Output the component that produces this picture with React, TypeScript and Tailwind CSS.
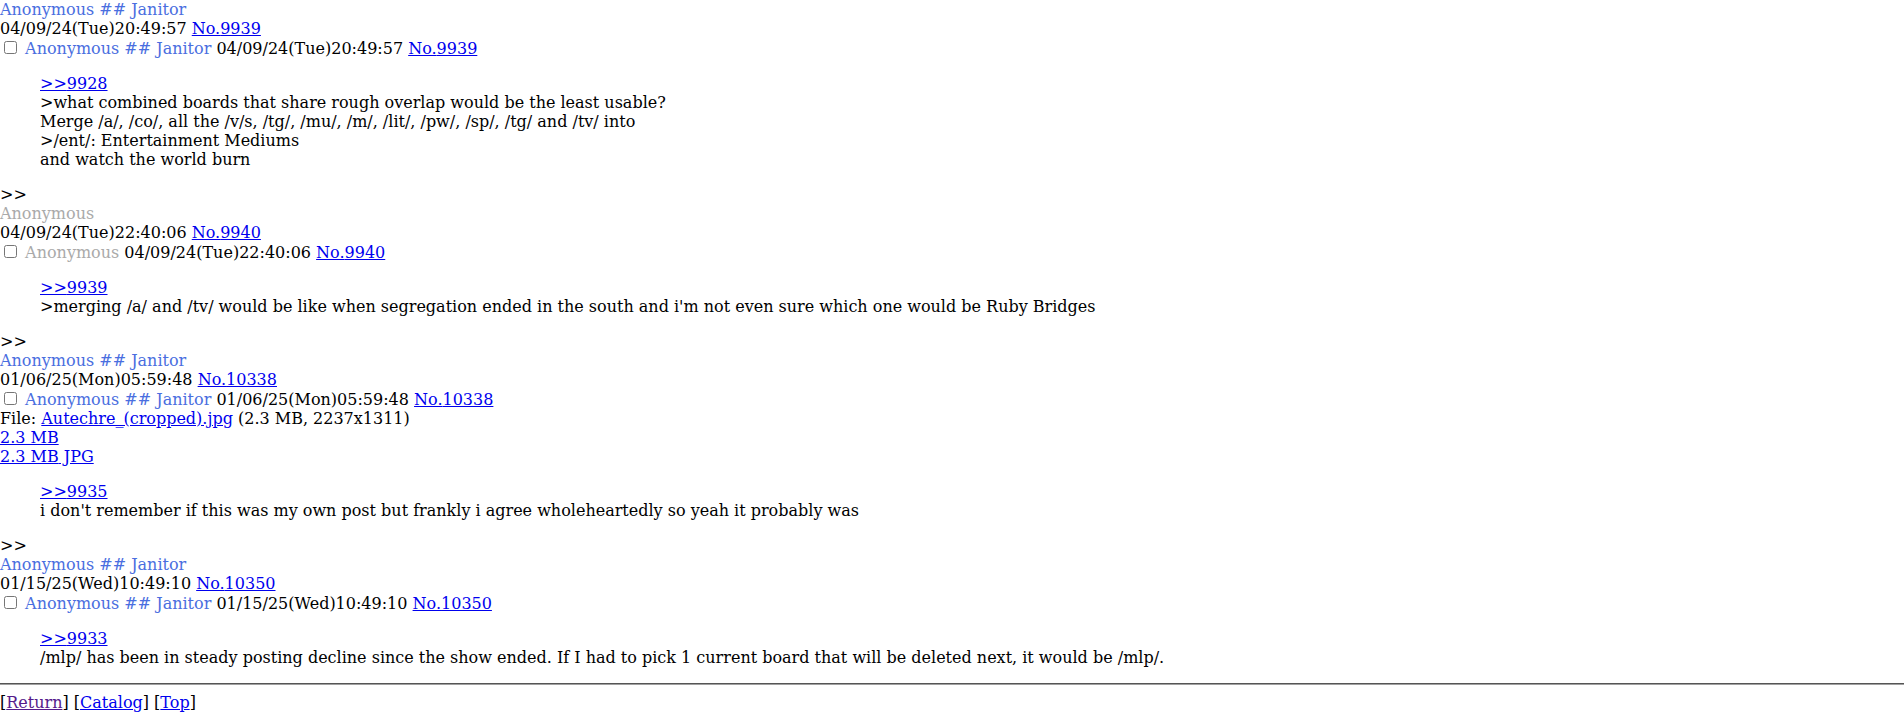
import React from "react"

const link = "text-[#0000ee] underline"

interface Post {
  name: string
  janitor?: boolean
  date: string
  no: string
  file?: { name: string; info: string; size: string }
  quote: string
  lines: string[]
  arrows?: boolean
}

const posts: Post[] = [
  {
    name: "Anonymous",
    janitor: true,
    date: "04/09/24(Tue)20:49:57",
    no: "9939",
    quote: "9928",
    lines: [
      ">what combined boards that share rough overlap would be the least usable?",
      "Merge /a/, /co/, all the /v/s, /tg/, /mu/, /m/, /lit/, /pw/, /sp/, /tg/ and /tv/ into",
      ">/ent/: Entertainment Mediums",
      "and watch the world burn",
    ],
  },
  {
    name: "Anonymous",
    date: "04/09/24(Tue)22:40:06",
    no: "9940",
    quote: "9939",
    arrows: true,
    lines: [">merging /a/ and /tv/ would be like when segregation ended in the south and i'm not even sure which one would be Ruby Bridges"],
  },
  {
    name: "Anonymous",
    janitor: true,
    date: "01/06/25(Mon)05:59:48",
    no: "10338",
    arrows: true,
    file: { name: "Autechre_(cropped).jpg", info: "(2.3 MB, 2237x1311)", size: "2.3 MB" },
    quote: "9935",
    lines: ["i don't remember if this was my own post but frankly i agree wholeheartedly so yeah it probably was"],
  },
  {
    name: "Anonymous",
    janitor: true,
    date: "01/15/25(Wed)10:49:10",
    no: "10350",
    arrows: true,
    quote: "9933",
    lines: ["/mlp/ has been in steady posting decline since the show ended. If I had to pick 1 current board that will be deleted next, it would be /mlp/."],
  },
]

function NameBlock({ p }: { p: Post }) {
  return p.janitor ? (
    <span className="text-[#4a6ee0]">{p.name} ## Janitor</span>
  ) : (
    <span className="text-[#aaaaaa]">{p.name}</span>
  )
}

function PostItem({ p }: { p: Post }) {
  return (
    <div>
      {p.arrows && <div>&gt;&gt;</div>}
      <div>
        <div>
          <NameBlock p={p} />
          <br />
          <span>{p.date}</span> <a className={link}>No.{p.no}</a>
        </div>
        <div>
          <input type="checkbox" className="m-[3px_3px_3px_4px] w-[13px] h-[13px] align-baseline" />{" "}
          <NameBlock p={p} /> <span>{p.date}</span> <a className={link}>No.{p.no}</a>
        </div>
        {p.file && (
          <div>
            <div>
              File: <a className={link}>{p.file.name}</a> {p.file.info}
            </div>
            <div><a className={link}>{p.file.size}</a></div>
            <div><a className={link}>{p.file.size} JPG</a></div>
          </div>
        )}
        <blockquote className="mx-[40px] my-4">
          <a className={link}>&gt;&gt;{p.quote}</a>
          {p.lines.map((l, i) => (
            <React.Fragment key={i}>
              <br />
              {l}
            </React.Fragment>
          ))}
        </blockquote>
      </div>
    </div>
  )
}

export default function App() {
  return (
    <div className="bg-white text-black text-[16px] leading-[normal] font-['DejaVu_Serif',serif] min-h-[716px]">
      {posts.map((p) => (
        <PostItem key={p.no} p={p} />
      ))}
      <hr className="my-2 h-0 border-0 border-t border-b border-t-[#555555] border-b-[#a0a0a0]" />
      <div>
        [<a className="text-[#551a8b] underline">Return</a>] [<a className={link}>Catalog</a>] [
        <a className={link}>Top</a>]
      </div>
    </div>
  )
}
